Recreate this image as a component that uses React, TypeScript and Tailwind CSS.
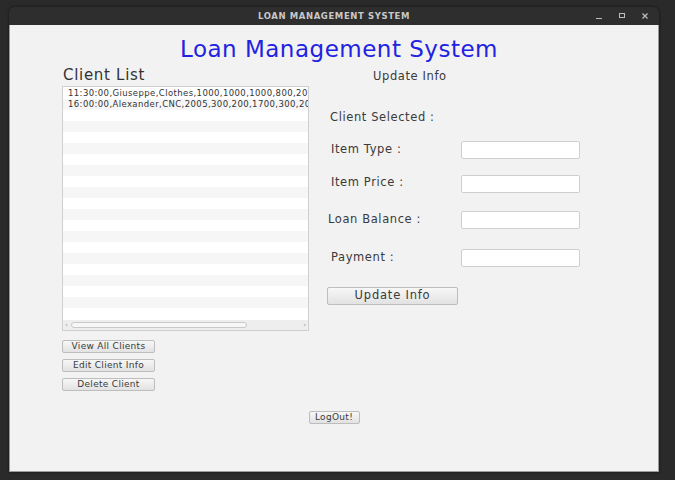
import React from "react";

const rows = [
  "11:30:00,Giuseppe,Clothes,1000,1000,1000,800,200,0",
  "16:00:00,Alexander,CNC,2005,300,200,1700,300,2005",
];

function SmallButton({ label, className }: { label: string; className: string }) {
  return (
    <button
      className={`flex items-center justify-center rounded-[2px] border border-[#bdbdbd] bg-gradient-to-b from-[#f7f7f7] to-[#e2e2e2] tracking-[0.3px] text-[#3a3a3a] ${className}`}
    >
      {label}
    </button>
  );
}

function Field({ label, top, labelLeft }: { label: string; top: string; labelLeft: string }) {
  return (
    <div className={`flex items-center ${top}`}>
      <span className={`w-[134px] text-[11.5px] tracking-[0.6px] text-[#3a3a3a] ${labelLeft}`}>{label}</span>
      <div className="h-[18px] w-[119px] rounded-[2px] border border-[#cfcfcf] bg-white" />
    </div>
  );
}

export default function App() {
  return (
    <div
      className="h-[480px] w-[675px] overflow-hidden bg-[#2a2a2a] pl-[9px] pt-[7px]"
      style={{ fontFamily: '"DejaVu Sans", Verdana, sans-serif' }}
    >
      <div className="w-[650px] overflow-hidden rounded-t-[6px] shadow-[0_0_3px_rgba(0,0,0,0.6)]">
        {/* title bar */}
        <div className="relative flex h-[18px] items-center justify-center bg-[#2e2e2e]">
          <span className="text-[8.5px] font-bold tracking-[0.6px] text-[#c8c8c8]">LOAN MANAGEMENT SYSTEM</span>
          <div className="absolute right-[10px] top-0 flex h-full items-center gap-[15px] text-[#bdbdbd]">
            <svg width="8" height="8" viewBox="0 0 8 8">
              <rect x="1" y="6" width="6" height="1" fill="currentColor" />
            </svg>
            <svg width="8" height="8" viewBox="0 0 8 8">
              <rect x="1.5" y="1.5" width="5" height="4" fill="none" stroke="currentColor" strokeWidth="1" />
            </svg>
            <svg width="8" height="8" viewBox="0 0 8 8">
              <path d="M1.5 1.5 L6.5 6.5 M6.5 1.5 L1.5 6.5" stroke="currentColor" strokeWidth="1.2" />
            </svg>
          </div>
        </div>

        {/* content */}
        <div className="h-[447px] border-l border-r border-b border-[#9a9a9a] bg-[#f2f2f2] pt-[10px]">
          <h1 className="pl-[10px] text-center text-[23px] leading-[28px] tracking-[0.5px] text-[#2222e0]">
            Loan Management System
          </h1>

          <div className="flex">
            {/* left column */}
            <div className="ml-[52px] w-[247px]">
              <div className="mt-[2px] h-[20px] pl-[1px] text-[15px] leading-[20px] tracking-[0.7px] text-[#333]">Client List</div>
              <div className="mt-[1px] flex h-[245px] flex-col border border-[#cfcfcf] bg-white">
                <div className="flex-1 overflow-hidden pt-[1px]">
                  {Array.from({ length: 21 }).map((_, i) => (
                    <div
                      key={i}
                      className={`h-[11px] overflow-hidden whitespace-nowrap pl-[5px] text-[8.5px] leading-[11px] tracking-[0.4px] text-[#333] ${
                        i % 2 === 1 ? "bg-[#f6f6f6]" : "bg-white"
                      }`}
                    >
                      {rows[i] ?? ""}
                    </div>
                  ))}
                </div>
                <div className="flex h-[10px] items-center bg-[#eeeeee] px-[2px] text-[7px] text-[#999]">
                  <span>‹</span>
                  <div className="ml-[3px] h-[6px] w-[176px] rounded-[3px] border border-[#c9c9c9] bg-[#f7f7f7]" />
                  <span className="ml-auto">›</span>
                </div>
              </div>

              <SmallButton label="View All Clients" className="mt-[9px] h-[13px] w-[93px] text-[9px]" />
              <SmallButton label="Edit Client Info" className="mt-[6px] h-[13px] w-[93px] text-[9px]" />
              <SmallButton label="Delete Client" className="mt-[6px] h-[13px] w-[93px] text-[9px]" />
            </div>

            {/* right column */}
            <div className="ml-[18px] flex flex-col">
              <div className="ml-[46px] mt-[6px] text-[11.5px] leading-[14px] tracking-[0.6px] text-[#3a3a3a]">Update Info</div>
              <div className="ml-[3px] mt-[27px] text-[11.5px] leading-[14px] tracking-[0.6px] text-[#3a3a3a]">Client Selected :</div>
              <Field label="Item Type :" top="mt-[17px]" labelLeft="pl-[4px]" />
              <Field label="Item Price :" top="mt-[16px]" labelLeft="pl-[4px] -mt-[2px]" />
              <Field label="Loan Balance :" top="mt-[18px]" labelLeft="pl-[1px]" />
              <Field label="Payment :" top="mt-[20px]" labelLeft="pl-[4px]" />
              <SmallButton label="Update Info" className="mt-[20px] h-[18px] w-[131px] text-[11.5px] tracking-[0.8px]" />
            </div>
          </div>

          <div className="mt-[20px] flex justify-center">
            <SmallButton label="LogOut!" className="h-[13px] w-[51px] text-[9px]" />
          </div>
        </div>
      </div>
    </div>
  );
}
